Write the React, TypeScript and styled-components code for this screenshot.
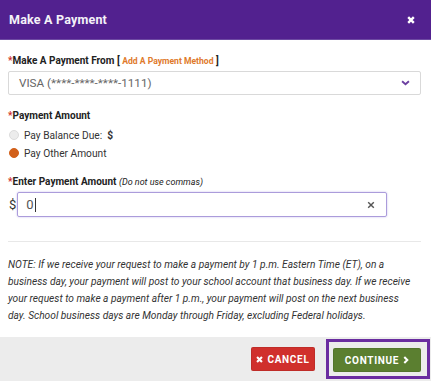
import React from "react";
import styled, { createGlobalStyle } from "styled-components";

const Global = createGlobalStyle`
  html, body { margin: 0; padding: 0; background: #fff; }
  body { font-family: Roboto, "Liberation Sans", Arial, sans-serif; }
  * { box-sizing: border-box; }
`;

const Dialog = styled.div`
  width: 431px;
  height: 381px;
  display: flex;
  flex-direction: column;
  background: #fff;
  overflow: hidden;
`;

const Header = styled.div`
  flex: 0 0 40px;
  background: #52218f;
  border-bottom: 1px solid #6d4aa2;
  display: flex;
  align-items: center;
  justify-content: space-between;
  padding: 0 16px 0 9px;
  color: #f4f2f8;
`;

const Title = styled.h1`
  margin: 0;
  font-size: 12.5px;
  font-weight: 700;
  letter-spacing: 0.2px;
`;

const CloseBtn = styled.span`
  display: flex;
  width: 8px;
  height: 8px;
`;

const Body = styled.div`
  flex: 1 1 auto;
  min-height: 0;
  padding: 14px 9px 0 8px;
  display: flex;
  flex-direction: column;
`;

const Label = styled.div`
  font-size: 10px;
  font-weight: 700;
  color: #222;
  line-height: 14px;
  margin-bottom: 3px;
`;

const Req = styled.span`
  color: #d0312d;
`;

const Link = styled.span`
  color: #e07a2b;
  font-size: 8.6px;
`;

const Hint = styled.span`
  font-size: 9px;
  font-style: italic;
  font-weight: 400;
  color: #222;
`;

const Select = styled.div`
  height: 24px;
  border: 1px solid #d9d9d9;
  border-radius: 2px;
  display: flex;
  align-items: center;
  justify-content: space-between;
  padding: 0 10px 0 10px;
  font-size: 11.7px;
  color: #666;
  margin-bottom: 14px;
  margin-right: 1px;
`;

const RadioRow = styled.div`
  display: flex;
  align-items: center;
  gap: 5px;
  height: 18px;
  font-size: 10.2px;
  color: #333;
`;

const Dot = styled.span<{ $on?: boolean }>`
  width: 10px;
  height: 10px;
  border-radius: 50%;
  margin-left: 1px;
  background: ${(p) => (p.$on ? "#d2601a" : "#ececec")};
  border: 1px solid ${(p) => (p.$on ? "#d2601a" : "#dcdcdc")};
`;

const Group = styled.div`
  margin-bottom: 13px;
`;

const AmountRow = styled.div`
  display: flex;
  align-items: center;
  gap: 1px;
`;

const Dollar = styled.span`
  font-size: 13px;
  color: #333;
  margin-left: 1px;
`;

const AmountInput = styled.div`
  width: 370px;
  height: 25px;
  border: 1px solid #ab9cdb;
  border-radius: 2px;
  box-shadow: 0 0 2px rgba(120, 100, 210, 0.45);
  display: flex;
  align-items: center;
  justify-content: space-between;
  padding: 0 11px 0 8px;
  font-size: 13px;
  color: #555;
`;

const Caret = styled.span`
  display: inline-block;
  width: 1px;
  height: 14px;
  background: #333;
  vertical-align: middle;
  margin-left: 1px;
`;

const Rule = styled.hr`
  border: 0;
  border-top: 1px solid #e8e8e8;
  margin: 24px 0 0 0;
  width: 413px;
`;

const Note = styled.p`
  margin: 14px 0 0 0;
  width: 411px;
  font-size: 10.2px;
  line-height: 17px;
  font-style: italic;
  color: #333;
`;

const Footer = styled.div`
  flex: 0 0 44px;
  background: #ececec;
  display: flex;
  align-items: center;
  justify-content: flex-end;
  padding-right: 1px;
  gap: 11px;
`;

const Button = styled.button<{ $color: string; $w: number }>`
  width: ${(p) => p.$w}px;
  height: 24px;
  border: 1px solid rgba(0, 0, 0, 0.08);
  border-radius: 2px;
  background: ${(p) => p.$color};
  color: #fff;
  font-family: Roboto, "Liberation Sans", Arial, sans-serif;
  font-size: 10px;
  font-weight: 700;
  letter-spacing: 0.7px;
  display: flex;
  align-items: center;
  justify-content: center;
  gap: 4px;
  padding: 0;
`;

const Focus = styled.div`
  border: 3px solid #6a2ca0;
  padding: 6px 6px 4px 4px;
`;

const XIcon = ({ size = 9, color = "#fff", w = 2.6 }: { size?: number; color?: string; w?: number }) => (
  <svg width={size} height={size} viewBox="0 0 10 10">
    <path d="M1.5 1.5 L8.5 8.5 M8.5 1.5 L1.5 8.5" stroke={color} strokeWidth={w} strokeLinecap="butt" />
  </svg>
);

export default function App() {
  return (
    <>
      <Global />
      <Dialog>
        <Header>
          <Title>Make A Payment</Title>
          <CloseBtn>
            <XIcon size={8} w={3} />
          </CloseBtn>
        </Header>
        <Body>
          <Label>
            <Req>*</Req>Make A Payment From [ <Link>Add A Payment Method</Link> ]
          </Label>
          <Select>
            <span>VISA (****-****-****-1111)</span>
            <svg width="9" height="6" viewBox="0 0 10 7">
              <path d="M1 1.5 L5 5 L9 1.5" stroke="#6b3fa0" strokeWidth="2.2" fill="none" />
            </svg>
          </Select>
          <Group>
            <Label>
              <Req>*</Req>Payment Amount
            </Label>
            <RadioRow>
              <Dot />
              Pay Balance Due: <b>$</b>
            </RadioRow>
            <RadioRow>
              <Dot $on />
              Pay Other Amount
            </RadioRow>
          </Group>
          <Label>
            <Req>*</Req>Enter Payment Amount <Hint>(Do not use commas)</Hint>
          </Label>
          <AmountRow>
            <Dollar>$</Dollar>
            <AmountInput>
              <span>
                0<Caret />
              </span>
              <XIcon size={8} color="#555" w={1.8} />
            </AmountInput>
          </AmountRow>
          <Rule />
          <Note>
            NOTE: If we receive your request to make a payment by 1 p.m. Eastern Time (ET), on a business day, your
            payment will post to your school account that business day. If we receive your request to make a payment
            after 1 p.m., your payment will post on the next business
            <br />
            day. School business days are Monday through Friday, excluding Federal holidays.
          </Note>
        </Body>
        <Footer>
          <Button $color="#d0302c" $w={64}>
            <XIcon size={7} w={3} />
            CANCEL
          </Button>
          <Focus>
            <Button $color="#5b7f30" $w={88}>
              CONTINUE
              <svg width="6" height="8" viewBox="0 0 7 9">
                <path d="M1.5 1 L5 4.5 L1.5 8" stroke="#fff" strokeWidth="2.4" fill="none" />
              </svg>
            </Button>
          </Focus>
        </Footer>
      </Dialog>
    </>
  );
}
